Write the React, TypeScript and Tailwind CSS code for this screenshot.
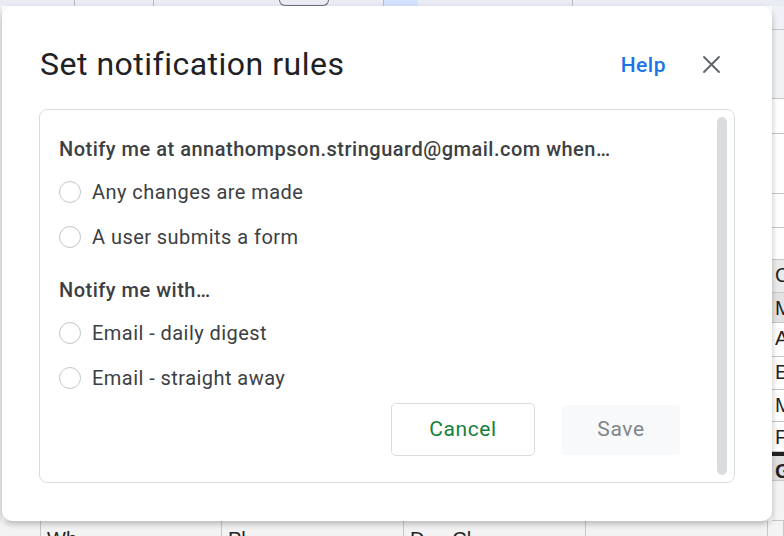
const radiosWhen = ['Any changes are made', 'A user submits a form']
const radiosWith = ['Email - daily digest', 'Email - straight away']

function Radio({ label }: { label: string }) {
  return (
    <label className="flex items-center h-[45px] gap-[11px] cursor-pointer">
      <span className="w-[22px] h-[22px] rounded-full border border-[#c4c7c5] bg-white shrink-0" />
      <span className="text-[20px] tracking-[0.45px] text-[#3c4043]">{label}</span>
    </label>
  )
}

function SheetBackdrop() {
  const rightCells = [
    { h: 24, bg: 'bg-[#eef1f6]', text: '' },
    { h: 70, bg: 'bg-[#f1f3f6]', text: '' },
    { h: 35, bg: 'bg-white', text: '' },
    { h: 60, bg: 'bg-white', text: '' },
    { h: 35, bg: 'bg-white', text: '' },
    { h: 32, bg: 'bg-white', text: '' },
    { h: 33, bg: 'bg-[#ebebeb]', text: 'C' },
    { h: 30, bg: 'bg-[#e2e2e2]', text: 'M' },
    { h: 35, bg: 'bg-white', text: 'A' },
    { h: 33, bg: 'bg-white', text: 'E' },
    { h: 32, bg: 'bg-white', text: 'M' },
    { h: 30, bg: 'bg-white', text: 'F' },
    { h: 30, bg: 'bg-[#e0e0e0]', text: 'G' },
    { h: 40, bg: 'bg-[#f3f3f3]', text: '' },
  ]
  const bottomCells = [
    { w: 41, text: '' },
    { w: 181, text: 'Wh' },
    { w: 182, text: 'Pl' },
    { w: 182, text: 'D     Cl' },
    { w: 182, text: '' },
    { w: 16, text: '' },
  ]

  return (
    <div className="flex flex-col w-full h-full">
      <div className="flex h-[6px] bg-[#e9ecf4] shrink-0">
        <div className="w-[75px] border-r border-[#b9bcc2]" />
        <div className="w-[79px] border-r border-[#b9bcc2]" />
        <div className="w-[125px]" />
        <div className="w-[50px] border border-t-0 border-[#6b6e73] rounded-b-full" />
        <div className="w-[55px] border-r border-[#b9bcc2]" />
        <div className="w-[34px] bg-[#d3e3fd]" />
        <div className="w-[155px] border-r border-[#b9bcc2]" />
        <div className="flex-1" />
      </div>
      <div className="flex flex-1 min-h-0">
        <div className="w-[2px] bg-[#eeeeee]" />
        <div className="flex-1" />
        <div className="w-[12px] flex flex-col">
          {rightCells.map((c, i) => (
            <div
              key={i}
              className={`${c.bg} border-b border-[#c7c7c7] overflow-hidden pl-[3px] text-[20px] leading-[30px] text-[#222] font-[Liberation_Sans,Arial,sans-serif] ${c.text === 'G' ? 'font-bold border-t-[4px] border-t-[#222]' : ''}`}
              style={{ height: c.h }}
            >
              {c.text}
            </div>
          ))}
        </div>
      </div>
      <div className="flex h-[15px] bg-[#f3f3f3] shrink-0 overflow-hidden">
        {bottomCells.map((c, i) => (
          <div
            key={i}
            className="border-r border-[#c7c7c7] pl-[6px] pt-[6px] text-[20px] leading-[24px] text-[#222] whitespace-pre font-[Liberation_Sans,Arial,sans-serif]"
            style={{ width: c.w }}
          >
            {c.text}
          </div>
        ))}
      </div>
    </div>
  )
}

export default function App() {
  return (
    <div className="relative w-[784px] h-[536px] overflow-hidden bg-white font-[Roboto,'Noto_Sans',sans-serif]">
      <SheetBackdrop />

      {/* Dialog */}
      <div className="absolute left-[2px] top-[6px] w-[770px] h-[515px] bg-white rounded-[10px] shadow-[0_3px_6px_rgba(0,0,0,0.25)] px-[37px] pt-[30px] flex flex-col">
        <div className="flex items-center h-[56px] pl-[1px]">
          <h1 className="flex-1 text-[32px] text-[#202124] tracking-[0.5px]">Set notification rules</h1>
          <button type="button" className="text-[21px] font-medium tracking-[0.5px] text-[#1a73e8] mr-[37px] mt-[3px]">
            Help
          </button>
          <button type="button" className="w-[17px] h-[17px] flex items-center justify-center mr-[15px]">
            <svg width="17" height="17" viewBox="0 0 17 17" fill="none" stroke="#5f6368" strokeWidth="1.8" strokeLinecap="round">
              <path d="M1 1L16 16M16 1L1 16" />
            </svg>
          </button>
        </div>

        <div className="mt-[17px] h-[374px] border border-[#dadce0] rounded-[8px] flex">
          <div className="flex-1 pl-[19px] pt-[27px] flex flex-col">
            <p className="text-[20px] leading-[24px] font-medium tracking-[0.5px] text-[#3c4043]">
              Notify me at annathompson.stringuard@gmail.com when…
            </p>
            <div className="mt-[8px] flex flex-col">
              {radiosWhen.map((r) => (
                <Radio key={r} label={r} />
              ))}
            </div>
            <p className="mt-[19px] text-[20px] leading-[24px] font-medium tracking-[0.5px] text-[#3c4043]">
              Notify me with…
            </p>
            <div className="mt-[8px] flex flex-col">
              {radiosWith.map((r) => (
                <Radio key={r} label={r} />
              ))}
            </div>
            <div className="flex justify-end items-center gap-[27px] pr-[37px] mt-[3px]">
              <button
                type="button"
                className="w-[144px] h-[53px] rounded-[5px] border border-[#dadce0] text-[21px] tracking-[0.6px] text-[#188038]"
              >
                Cancel
              </button>
              <button
                type="button"
                disabled
                className="w-[118px] h-[50px] rounded-[4px] bg-[#f8f9fa] text-[21px] tracking-[0.6px] text-[#80868b]"
              >
                Save
              </button>
            </div>
          </div>
          <div className="w-[10px] my-[7px] mr-[7px] rounded-full bg-[#dadce0]" />
        </div>
      </div>
    </div>
  )
}
